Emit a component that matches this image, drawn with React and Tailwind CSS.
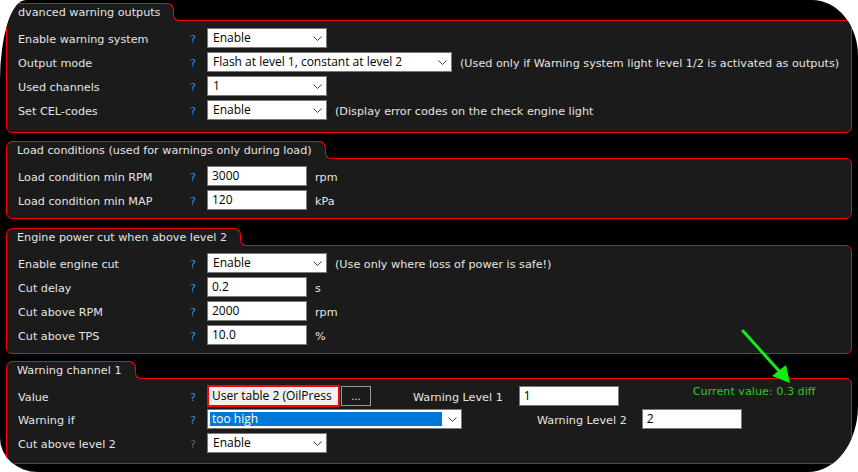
import React from 'react'

const panelBg = 'bg-[#1b1b1b]'

function Chevron() {
  return (
    <svg width="9" height="5" viewBox="0 0 9 5" className="shrink-0">
      <polyline points="0.5,0.5 4.5,4.5 8.5,0.5" fill="none" stroke="#444" strokeWidth="1" />
    </svg>
  )
}

function Select({ value, w = 'w-[120px]' }) {
  return (
    <div className={`${w} flex h-5 shrink-0 items-center justify-between border border-[#7a7a7a] bg-white pl-[5px] pr-[4px] font-['Open_Sans',sans-serif] text-[12px] text-black`}>
      <span className="whitespace-nowrap leading-none">{value}</span>
      <Chevron />
    </div>
  )
}

function Input({ value }) {
  return (
    <div className="flex h-5 w-[100px] shrink-0 items-center border border-[#7a7a7a] bg-white pl-[4px] font-['Open_Sans',sans-serif] text-[12px] text-black">
      <span className="leading-none">{value}</span>
    </div>
  )
}

function Row({ label, gray, children, h = 'h-5' }) {
  return (
    <div className={`flex ${h} items-center`}>
      <span className="w-[172px] shrink-0 whitespace-nowrap pt-[4px]">{label}</span>
      <span className={`w-[17px] shrink-0 pt-[4px] ${gray ? 'text-[#666]' : 'text-[#2596e8]'}`}>?</span>
      {children}
    </div>
  )
}

function Note({ children }) {
  return <span className="ml-2 whitespace-nowrap pt-[4px]">{children}</span>
}

function Tab({ children, open }) {
  return (
    <div className="relative z-10 -mb-px flex">
      <div className={`relative h-[18px] rounded-t-[7px] border-t border-r border-[#f00] ${open ? 'rounded-tl-none pl-[12px]' : 'border-l pl-[10px]'} ${panelBg} pr-[13px] leading-[17px] whitespace-nowrap`}>
        {children}
        <div className={`absolute left-full bottom-0 h-[6px] w-[6px] ${panelBg}`}>
          <div className="h-full w-full rounded-bl-[6px] border-b border-l border-[#f00] bg-black" />
        </div>
      </div>
    </div>
  )
}

function Panel({ children, className = '' }) {
  return (
    <div className={`rounded-b-[6px] rounded-tr-[6px] border border-[#f00] ${panelBg} pl-[11px] ${className}`}>
      {children}
    </div>
  )
}

export default function App() {
  return (
    <div className="h-[472px] w-[858px] overflow-hidden bg-white">
      <div className="relative h-full w-full overflow-hidden rounded-tl-[26px_80px] rounded-tr-[46px_56px] rounded-bl-[38px_34px] rounded-br-[50px_66px] bg-black px-[6px] pt-[3px] font-['DejaVu_Sans',sans-serif] text-[11.2px] text-[#e4e4e4]">
        {/* the leading "A" is hidden in the original capture */}
        <Tab open>dvanced warning outputs</Tab>
        <Panel className="flex flex-col gap-1 pt-[7px] pb-[12px]">
          <Row label="Enable warning system"><Select value="Enable" /></Row>
          <Row label="Output mode">
            <Select value="Flash at level 1, constant at level 2" w="w-[245px]" />
            <Note>(Used only if Warning system light level 1/2 is activated as outputs)</Note>
          </Row>
          <Row label="Used channels"><Select value="1" /></Row>
          <Row label="Set CEL-codes">
            <Select value="Enable" />
            <Note>(Display error codes on the check engine light</Note>
          </Row>
        </Panel>

        <div className="mt-[8px]">
          <Tab>Load conditions (used for warnings only during load)</Tab>
          <Panel className="flex flex-col gap-1 pt-[7px] pb-[8px]">
            <Row label="Load condition min RPM"><Input value="3000" /><Note>rpm</Note></Row>
            <Row label="Load condition min MAP"><Input value="120" /><Note>kPa</Note></Row>
          </Panel>
        </div>

        <div className="mt-[9px]">
          <Tab>Engine power cut when above level 2</Tab>
          <Panel className="flex flex-col gap-1 pt-[7px] pb-[8px]">
            <Row label="Enable engine cut">
              <Select value="Enable" />
              <Note>(Use only where loss of power is safe!)</Note>
            </Row>
            <Row label="Cut delay"><Input value="0.2" /><Note>s</Note></Row>
            <Row label="Cut above RPM"><Input value="2000" /><Note>rpm</Note></Row>
            <Row label="Cut above TPS"><Input value="10.0" /><Note>%</Note></Row>
          </Panel>
        </div>

        <div className="mt-[7px]">
          <Tab>Warning channel 1</Tab>
          <Panel className="flex flex-col pt-[6px] pb-[10px]">
            <Row label="Value" h="h-[22px]">
              <div className="flex h-[22px] w-[133px] shrink-0 items-center overflow-hidden whitespace-nowrap border-2 border-[#f00] bg-[#f0f0f0] pl-[3px] font-['Open_Sans',sans-serif] text-[12px] text-black">
                <span className="leading-none">User table 2 (OilPress</span>
              </div>
              <div className="ml-px flex h-5 w-[30px] shrink-0 items-end justify-center border border-[#999] pb-[3px] text-[10px] leading-none">...</div>
              <span className="ml-[42px] mt-[5px] whitespace-nowrap">Warning Level 1</span>
              <div className="ml-[16px]"><Input value="1" /></div>
              <span className="ml-[74px] mb-[7px] whitespace-nowrap text-[#22cc22]">Current value: 0.3 diff</span>
            </Row>
            <div className="mt-[2px]">
              <Row label="Warning if">
                <div className="flex h-5 w-[255px] shrink-0 items-center justify-between border border-[#7a7a7a] bg-white p-[2px] pr-[4px] font-['Open_Sans',sans-serif] text-[12px]">
                  <div className="flex h-full w-[232px] items-center bg-[#0078d7] pl-[2px] text-white">
                    <span className="leading-none">too high</span>
                  </div>
                  <Chevron />
                </div>
                <span className="ml-[75px] mt-[4px] whitespace-nowrap">Warning Level 2</span>
                <div className="ml-[15px]"><Input value="2" /></div>
              </Row>
            </div>
            <div className="mt-1">
              <Row label="Cut above level 2" gray><Select value="Enable" /></Row>
            </div>
          </Panel>
        </div>

        <svg className="absolute left-[738px] top-[326px]" width="60" height="64" viewBox="0 0 60 64">
          <line x1="5" y1="5" x2="42" y2="46" stroke="#11ee11" strokeWidth="3" strokeLinecap="round" />
          <polygon points="34,50 48,39 52,57" fill="#11ee11" />
        </svg>
      </div>
    </div>
  )
}
